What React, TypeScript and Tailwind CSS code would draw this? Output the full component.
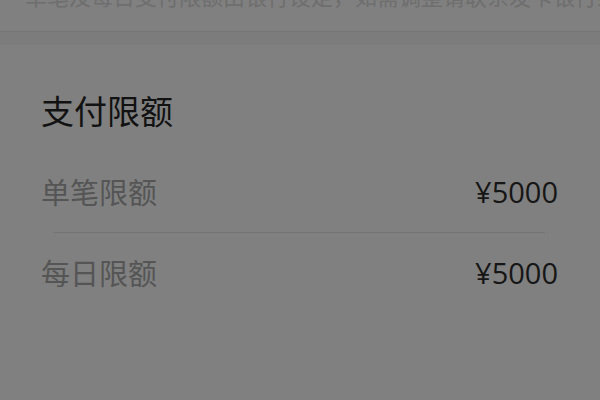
import React from "react";

const limits = [
  { label: "单笔限额", amount: "¥5000" },
  { label: "每日限额", amount: "¥5000" },
];

export default function App() {
  return (
    <div
      className="w-[600px] h-[400px] overflow-hidden bg-[#808080]"
      style={{ fontFamily: '"Noto Sans CJK SC", "Noto Sans", sans-serif' }}
    >
      {/* notice text above, scrolled mostly out of view */}
      <div className="h-[31px] overflow-hidden px-[25px]">
        <p className="-mt-[17px] text-[22px] leading-[24px] text-[#6e6e6e] whitespace-nowrap">
          单笔及每日支付限额由银行设定，如需调整请联系发卡银行或客服
        </p>
      </div>
      <div className="h-[14px] border-t border-[#767676] bg-[#7c7c7c]" />

      <div className="px-[41px]">
        <h2 className="mt-[45px] h-[40px] text-[33px] leading-[40px] text-[#121212]">
          支付限额
        </h2>
        <div className="mt-[22px]">
          {limits.map((item, i) => (
            <div key={item.label}>
              <div className="flex h-[80px] items-center justify-between">
                <span className="text-[29px] text-[#555555]">{item.label}</span>
                <span
                  className="text-[29px] mr-[1px] text-[#161616]"
                  style={{ fontFamily: '"Open Sans", "Noto Sans CJK SC", sans-serif' }}
                >
                  {item.amount}
                </span>
              </div>
              {i === 0 && <div className="ml-[12px] mr-[14px] h-px bg-[#747474]" />}
            </div>
          ))}
        </div>
      </div>
    </div>
  );
}
